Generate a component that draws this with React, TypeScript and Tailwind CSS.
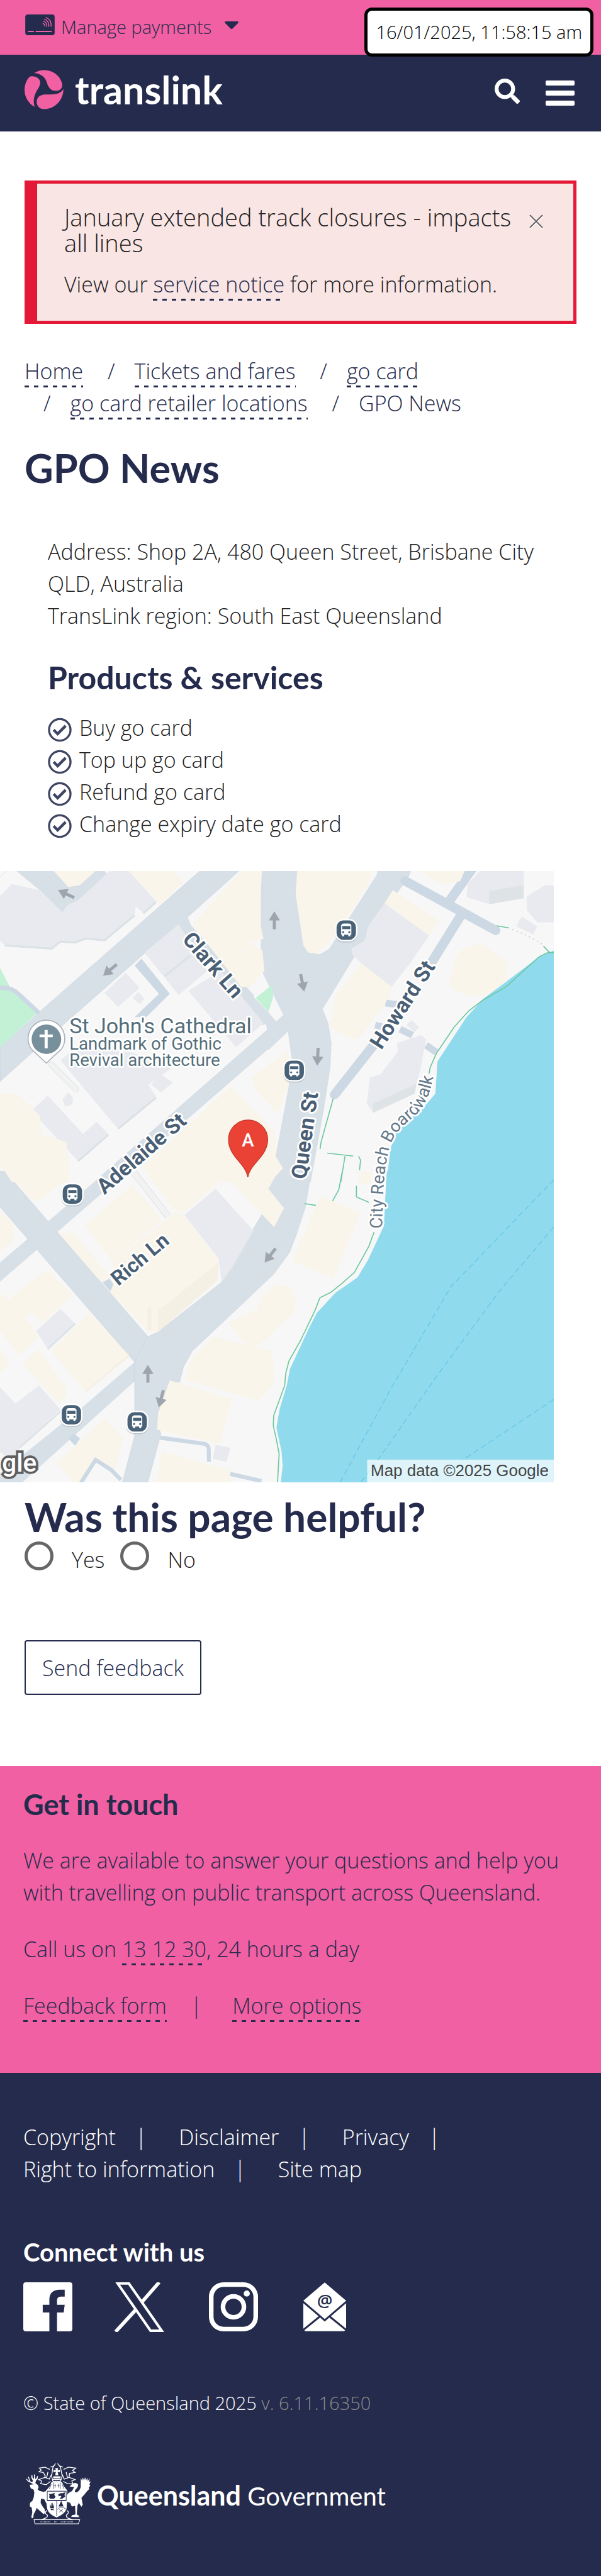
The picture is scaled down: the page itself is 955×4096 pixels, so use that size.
import React from "react";
import { FaSearch } from "react-icons/fa";

const HEAD = "font-['Lato','Open_Sans',sans-serif] font-bold";

function DottedLink({ href = "#", children }: { href?: string; children: React.ReactNode }) {
  return (
    <a
      href={href}
      className="bg-[repeating-linear-gradient(90deg,#252b4c_0_7px,transparent_7px_15px)] bg-[length:100%_3px] bg-bottom bg-no-repeat pb-[3px] text-[#252b4c]"
    >
      {children}
    </a>
  );
}

function CardIcon() {
  return (
    <svg viewBox="0 0 58 41" className="h-[33px] w-[47px]" aria-hidden="true">
      <rect width="58" height="41" rx="5" fill="#252b4c" />
      <path d="M5.500 33.500H17M20.500 33.500H52" stroke="#f060a2" strokeWidth="2.400" fill="none" />
      <g stroke="#f060a2" strokeWidth="1.800" fill="none" strokeLinecap="round">
        <path d="M35 18q4 1 3.500 5" />
        <path d="M36 13.500q7 2 6.500 10" />
        <path d="M38 9.500q9 3 8.500 14" />
        <path d="M41 6q11 4 10 17.500" />
      </g>
    </svg>
  );
}

function TranslinkMark() {
  return (
    <svg viewBox="0 0 77 77" className="h-[63px] w-[62px]" fill="#f060a2" aria-hidden="true">
      <path d="M19 6C25 2 31 0 38.500 0 56 0 70 11 74 26c2 8-3 15-12 15-8 0-12-4-15-9-3-6-4-13-9-18-5-5-12-8-19-8z" />
      <path d="M15.500 12c8 0 15 5 15.500 12 0 8-5 13-9 21-4 9-5 18-2 27.500C8 66 0 53 0 39 0 29 4 20 9 14c2-1.500 4-2 6.500-2z" />
      <path d="M76.800 37C77 59 60 77 39 77c-9 0-15-6-15-14 0-9 6-14 15-15 8 0 15 1 24-1 7-2 11-5 13.800-10z" />
    </svg>
  );
}

function CheckIcon() {
  return (
    <svg viewBox="0 0 39 39" className="h-[39px] w-[38px]" fill="none" stroke="#3f4562" aria-hidden="true">
      <circle cx="19.500" cy="19.500" r="17.500" strokeWidth="3.400" />
      <path d="M9.500 19.500l6.500 6.500L29 13" strokeWidth="4.500" />
    </svg>
  );
}

function Bus({ x, y }: { x: number; y: number }) {
  return (
    <g transform={`translate(${x} ${y})`}>
      <rect x="-22" y="-21" width="44" height="45" rx="16" fill="#9aa5b0" opacity="0.5" />
      <rect x="-22" y="-22" width="44" height="44" rx="16" fill="#fff" />
      <rect x="-19" y="-19" width="38" height="38" rx="13" fill="#4a6278" />
      <path d="M-10-9q1-4 5-4H5q4 0 5 4V9H8v3H4V9H-4v3H-8V9h-2z" fill="#fff" />
      <path d="M-8-8H8v6H-8z" fill="#4a6278" />
      <circle cx="-6" cy="4" r="2" fill="#4a6278" />
      <circle cx="6" cy="4" r="2" fill="#4a6278" />
    </g>
  );
}

function Arrow({ x, y, r }: { x: number; y: number; r: number }) {
  return (
    <path
      transform={`translate(${x} ${y}) rotate(${r})`}
      d="M0-18L11 0H3V17H-3V0H-11z"
      fill="#9fa5ae"
    />
  );
}

function StreetMap() {
  const road = "#d7dfe7";
  const lane = "#ccd8e3";
  const cream = "#f9f5ea";
  const grey = "#e8eaef";
  const q1 = "translate(0 -10) scale(.3827 .3954)";
  const q2 = "translate(540 -10) scale(.4075 .3954)";
  const q3 = "translate(0 590) scale(.3827 .3954)";
  const q4 = "translate(540 590) scale(.4075 .3954)";
  return (
    <svg viewBox="0 0 1086 1200" className="block w-full" role="img" aria-label="Map showing GPO News">
      <rect width="1086" height="1200" fill="#f7f7f7" />
      <g fill={road} stroke="#c9d3dd" strokeWidth="2">
        <g transform={q1}>
          <path d="M1030 20L205 722 0 900V1070L310 800 740 435 975 290 960 255 1110 125 1230 20z" />
          <path d="M-5 60L40 20M80 20L205 120 320 230 345 195 375 185 400 170 545 40 530 20H485L400 100 350 105 270 20z" />
          <path d="M905 290L1345 790 1420 770 975 290z" stroke="none" />
          <path d="M1415 775L490 1562 525 1622 1475 822 1460 735z" />
          <path d="M690 495L815 635 690 750 750 750 870 635 725 460z" fill={lane} stroke="none" />
        </g>
        <g transform={q3}>
          <path d="M-5-2H25L760 820 690 945-5 170z" />
          <path d="M490 45L-5 455V550L525 105z" stroke="none" />
          <path d="M690 945L415 1175-5 1500V1550H105L690 1040z" stroke="none" />
          <path d="M1430-2H1568V150L1490 370 1400 510 1270 630 985 890 940 970 920 1045 870 1040 805 1250 825 1300 755 1550H625L690 1310V945L755 820 810 795 1140 545 1340 215 1455 180 1375 85 1385 35z" />
          <path d="M525 550L570 600 590 570 560 530z" fill={lane} stroke="none" />
          <path d="M350 1325L385 1360 410 1325 380 1300z" fill={lane} stroke="none" />
        </g>
        <path stroke="none" d="M515 0H582L580 45 595 150 610 165 555 165 540 250 550 290 530 450 540 570 525 610H600V0z" />
        <g transform={q2}>
          <path d="M-70 20H105L98 140 135 400 160 430 215 438 260 410 490 40V20H655L640 60 610 100 430 370 375 460 228 710 255 780 270 880 265 1000 235 1200 170 1570H0L-70 1568-62 1530-27 1500-62 1440 5 1100 22 960 0 820 60 820 78 960 65 1100 0 1440-40 820-50 740-70 700z" stroke="none" />
        </g>
        <g transform={q4} stroke="none">
          <path d="M-50-2H175L145 180 100 320 70 400 0 500-50 550z" />
        </g>
      </g>
      <g transform={q1}>
        <path fill="#f7f7f7" d="M1340 520L1452 740 1415 772 1378 730 1300 650z" />
        <path fill="#f7f7f7" d="M1475 822L1495 960 1478 1100 1412 1440 1180 1095z" />
        <path fill="#c3f1d5" d="M0 505L50 600 100 640 190 730 0 900zM1395 590L1310 655 1375 725 1400 650z" />
        <path stroke={lane} strokeWidth="22" fill="none" d="M0 605Q60 600 100 640L200 730" />
        <path fill={grey} d="M0 150L60 90 200 120 320 230 345 195 400 170 545 40 560 25H660L800 175 735 235 695 200 690 245 535 370 440 360 385 380 310 375 265 410 25 395 0 370zM740 430L915 290 1065 520 915 640zM965 620L1130 520 1350 780 1210 900zM535 630L645 530 715 605 605 700zM680 655L710 625 740 660 715 685zM310 965L440 860 900 990 760 1085 800 1145 605 1305zM775 1085L820 1030 885 1075 825 1125zM160 1215L245 1140 425 1330 495 1270 555 1330 400 1465zM320 1160L350 1125 375 1150 370 1185 335 1195z" />
        <path stroke="#dbe2e5" strokeWidth="10" fill="none" d="M25 395L265 410 310 375 385 380 440 360 535 370 690 245M845 545L975 445M605 1305L800 1150M400 1465L555 1335M735 235L800 178" />
        <path fill={cream} d="M275 25H490L410 95 350 105zM660 25H890L940 80 820 190zM1200 65L1250 25H1342L1330 270 1350 360 1280 385 1345 420 1355 520 1280 600 1235 600 985 290 1110 160zM0 1130L90 1130 205 1240 210 1330 340 1370 355 1480 355 1568H60L0 1480zM735 1490L1180 1095 1410 1320 1412 1440 1450 1500 1385 1568H780zM1290 1050L1470 920 1490 960 1475 1100 1425 1235 1310 1110z" />
        <path stroke="#dbe2e5" strokeWidth="30" strokeLinecap="round" d="M262 985L390 1108" />
        <path stroke="#f2f2f2" strokeWidth="24" strokeLinecap="round" d="M262 985L390 1108" />
      </g>
      <g transform={q3}>
        <path fill={cream} d="M30 0H345L350 30 205 140H165zM435 265L680 65 820 225 815 250 575 445zM300 305H380L560 520 520 550zM580 445L900 200 940 215 1120 430 1115 540 810 795 755 790 565 595 580 560zM750 0H1425L1375 85 1455 180 1405 275 1160 25 935 205 880 180zM0 190L70 270V340L0 400zM0 600L45 635 240 485 370 610 220 750 165 700 130 720 200 820 100 910 0 790zM265 890L460 700 660 910 440 1095zM115 950L200 880 340 1080V1110L300 1150zM290 1440L540 1225 630 1320 590 1480 485 1420 410 1550H380zM955 1000L980 930 1095 820 1395 890 1405 1045 1330 1135 955 1035zM1170 750L1320 680 1330 630 1410 560 1490 575 1515 630 1510 690 1365 830 1310 870 1250 850zM870 1035L1190 1130 1130 1350 805 1280 810 1200zM830 1390L1180 1480 1170 1550H800zM1540 330H1568V470L1505 450zM0 880L40 930V960L0 1000z" />
        <path fill="#f4f0e3" d="M810 690L1120 450 1115 540 810 795zM755 680L775 670V780L755 790zM440 1085L660 905V920L440 1095z" />
        <path fill={grey} d="M945 215L1105 85 1300 295 1190 480 1135 550 1120 430zM185 790L310 680 385 755 245 880zM0 1070L80 1150 200 1060 310 1180 100 1370 60 1440 0 1390zM1105 1355L1180 1370 1160 1440 1090 1425z" />
        <path stroke={lane} strokeWidth="20" fill="none" d="M820 1320L1045 1350Q1070 1355 1070 1380V1440M415 1543L490 1430 570 1480 620 1530M1180 1500L1340 1535" />
        <path stroke="#dbe2e5" strokeWidth="34" fill="none" d="M675-10L860 220" />
        <path stroke="#f2f2f2" strokeWidth="28" fill="none" d="M670-15L865 225" />
        <path stroke="#dbe2e5" strokeWidth="8" fill="none" d="M245 880L385 755M100 1370L310 1190M1300 295L1190 480 1140 545" />
      </g>
      <g transform={q2}>
        <path stroke={lane} strokeWidth="46" fill="none" strokeLinecap="round" d="M950 10L840 170M625 75L830 190 1060 320M890 250L745 490M480 880L285 1135" />
        <path stroke={lane} strokeWidth="34" fill="none" d="M530 680L600 690M480 790L520 800M600 810L660 840M725 890L775 925" />
        <path fill={grey} d="M525 185L740 345 650 480 560 600 415 485 370 440 365 410 430 370 445 300zM985 25H1195V160L1030 190 920 155 925 90zM1210 150L1300 95 1340 100V280H1260L1210 220zM1185 250L1260 300 1240 340 1160 300zM585 880L700 840 725 860 700 1000 670 1120 470 1225 440 1180 455 1050 505 1035 590 920zM655 765L692 800 670 825 630 790z" />
        <path fill="#dee3e6" d="M1030 125L1195 95V160L1030 190zM470 1180L680 1080 670 1130 470 1225z" />
        <path fill={cream} d="M565 120L790 275 740 345 525 185zM415 485L560 600 555 640 410 850 370 860 260 800 290 640zM105 25H465L455 70 350 250 260 380 200 435 160 430 135 395 98 140zM690 25H910L890 75 800 92zM870 450Q900 390 1000 390L1120 480 1110 570 1060 620Q960 670 870 620 820 580 840 560z" />
        <path fill="#90daee" d="M1340 420L1270 450 1110 575 1000 660 920 750 850 860 780 970 770 1130 700 1215 590 1300 555 1400 535 1568H1345V420z" />
        <g stroke="#6cc7a0" strokeWidth="5" fill="none">
          <path d="M1340 430H1312L1270 450 1110 600 1000 665 930 720 860 800 775 930 745 1000 740 1030M278 1155L220 1370 215 1405M250 1425L375 1440M335 1440L315 1568M400 1440L410 1460 405 1510M1065 297L1125 308M1290 398L1320 430" />
          <path stroke="#c9c9cf" strokeDasharray="6 16" d="M1140 315Q1220 345 1285 390" />
        </g>
      </g>
      <g transform={q4}>
        <path fill={cream} d="M215 120L410 205 280 530 85 445zM405 0H460V60L400 60zM-40 100L42 180-10 275zM-5 570H50L80 590 95 630 90 700 30 750-5 765z" />
        <path fill="#90daee" d="M536-5L522 270 445 440 395 525 290 600 200 700 160 780 70 980 55 1060 20 1180 5 1270 30 1390 35 1460 25 1550H1345V-5z" />
        <path stroke="#6cc7a0" strokeWidth="5" fill="none" d="M475 300L450 370 380 500 320 555 265 600 215 625 190 690 120 840 65 940 50 1000 45 1060 10 1160-8 1210-10 1260 5 1330 18 1400 10 1550M322 0L305 90 275 145M390 70V125L450 152M140 158L195 167" />
        <path stroke="#62c8e6" strokeWidth="4" fill="none" strokeDasharray="28 16" d="M1340 40L845 570 560 1070 310 1543M1340 275L1080 590 780 1010 500 1420 410 1543M1340 1130L910 1425 760 1543" />
      </g>
      <Arrow x={538} y={97} r={0} />
      <Arrow x={130} y={45} r={-65} />
      <Arrow x={216} y={194} r={-130} />
      <Arrow x={593} y={219} r={168} />
      <Arrow x={623} y={364} r={183} />
      <Arrow x={530} y={754} r={-142} />
      <Arrow x={290} y={987} r={0} />
      <Arrow x={316} y={1035} r={195} />
      <Bus x={679} y={116} />
      <Bus x={577} y={391} />
      <Bus x={142} y={634} />
      <Bus x={140} y={1067} />
      <Bus x={269} y={1081} />
      <path d="M91 377L62 350A36 36 0 1 1 120 350Q104 364 91 377z" fill="#fff" stroke="#aab4bb" strokeWidth="2" />
      <circle cx="91" cy="330" r="29" fill="#78909c" />
      <path d="M87.500 312h6v9h10v5h-10v22h-6v-22h-10v-5h10z" fill="#fff" />
      <path d="M486 601C482 574 448 560 448 527a38.500 38.500 0 0 1 77 0C525 560 490 574 486 601z" fill="#ea4335" stroke="#c5352a" strokeWidth="1.500" />
      <g className="font-['Roboto',sans-serif] font-normal" stroke="#fff" strokeWidth="7" strokeLinejoin="round" style={{ paintOrder: "stroke" }}>
        <g fill="#546e7a">
          <text x="136" y="319" fontSize="42">St John's Cathedral</text>
          <text x="136" y="351" fontSize="34">Landmark of Gothic</text>
          <text x="136" y="383" fontSize="34">Revival architecture</text>
        </g>
        <g fill="#4a5f75" fontWeight="700" fontSize="42">
          <text transform="translate(356 135) rotate(49)">Clark Ln</text>
          <text transform="translate(205 636) rotate(-41)">Adelaide St</text>
          <text transform="translate(600 606) rotate(-82)">Queen St</text>
          <text transform="translate(748 352) rotate(-57)">Howard St</text>
          <text transform="translate(232 815) rotate(-40)" fontSize="40">Rich Ln</text>
        </g>
        <path id="boardwalk" stroke="none" fill="none" d="M749 702C751 640 752 590 762 550S792 500 816 478 850 420 862 330" />
        <text fontSize="34" fill="#64788a">
          <textPath href="#boardwalk">City Reach Boardwalk</textPath>
        </text>
      </g>
      <g className="font-['Roboto',sans-serif]">
        <text x="486" y="540" fontSize="36" fontWeight="500" fill="#fff" textAnchor="middle">A</text>
        <text x="4" y="1178" fontSize="50" fontWeight="500" fill="#fff" stroke="#5f5f5f" strokeWidth="9" style={{ paintOrder: "stroke" }}>gle</text>
      </g>
      <rect x="720" y="1155" width="366" height="45" fill="#fff" opacity="0.7" />
      <text x="727" y="1187" fontSize="32" fontWeight="400" fill="#444" className="font-['Liberation_Sans',sans-serif]">Map data ©2025 Google</text>
    </svg>
  );
}

function Crest() {
  return (
    <svg viewBox="24 20 396 372" className="h-[98px] w-[107px] shrink-0" fill="#fff" aria-hidden="true">
      <path d="M50 153L72 150 60 142 40 133 27 118 31 116 44 128 47 127 39 104 44 103 54 132 64 137 70 130 59 108 62 92 66 93 67 108 76 118 76 90 81 90 84 118 92 112 95 100 100 102 98 117 88 128 84 142 100 155 104 168 98 180 110 190 135 196 146 190 150 206 148 240 156 262 150 264 138 240 118 236 116 262 128 284 140 300 143 322 134 330 112 310 92 292 84 312 74 330 72 350 64 356 60 346 66 318 62 290 50 282 52 262 66 250 74 230 78 200 74 182 56 174z" />
      <path d="M290 162L312 144Q334 136 342 152 342 168 326 182 316 200 334 198 352 190 358 166L358 112 366 128 370 108 378 126 384 106 390 126 398 110 400 130 412 114 408 136 418 132 410 152 416 156 406 172 410 178 394 194 380 212 362 232 370 272 362 286 346 262 338 278 334 332 348 340 346 348 300 346 306 336 326 332 324 280 304 284 294 262 278 256 270 226 282 204 306 190 318 166 300 164z" />
      <path d="M148 184H276V248L272 300Q258 332 212 350 166 332 156 300L148 248z" />
      <g fill="none" stroke="#252b4c" strokeWidth="3.500">
        <path d="M156 192H270V246H156zM213 250V342M154 249H272" />
      </g>
      <g fill="#252b4c">
        <path d="M166 206q8 6 20 0l16-4-4 12 8 10-8 12H174l-8-8 4-8zM222 212q12-12 24-8l18-6-4 16 4 10-20 14-14-4 12-8-6-8-10 4zM172 268l8 18 2-24h6l2 24 8-18-2 26h-22zM176 298h20l-2 8h-16zM240 250l14 34h-30z" />
      </g>
      <g fill="none" stroke="#252b4c" strokeWidth="3">
        <path d="M218 302q20-26 52-2M228 300l22 18M250 300l-22 18" />
      </g>
      <path d="M182 136h62l12 24 18 24H152l20-24z" />
      <g fill="none" stroke="#252b4c" strokeWidth="3">
        <path d="M192 140v38M234 140v38M203 148v22M197 156h12M224 148v22M218 156h12M180 150l-12 28M246 150l12 28" />
      </g>
      <g fill="none" stroke="#fff" strokeWidth="5">
        <path d="M206 24L190 48 182 100 190 132M218 24L236 48 246 100 236 132M176 46L196 38M228 38L250 46M188 120H240M190 132H238" />
        <path d="M172 60L142 46 108 52 120 64 106 74 132 78 144 100 138 112M254 60L284 46 328 52 308 66 324 78 290 84 288 106" />
        <path d="M182 90L168 118 142 108 104 122 122 130 116 146 150 152 176 132M246 90L258 118 288 108 324 122 304 130 312 148 278 146 252 132M160 76l-8 34M270 76l8 34" />
        <path d="M156 308Q138 316 148 330 166 336 150 352L120 364M274 308Q290 316 278 330 262 338 280 354L310 364" />
      </g>
      <path d="M204 52h18l-4 14 14-4v16l-14-4 6 22h-20l4-22-14 4V62l14 4zM192 102h44v12h-44z" />
      <path d="M76 363H352L344 388H82z" fill="none" stroke="#fff" strokeWidth="4" />
      <path d="M116 376h62M198 376h20M238 376h76" stroke="#fff" strokeWidth="8" strokeDasharray="3 4" opacity="0.75" />
    </svg>
  );
}

const crumbs = ["Tickets and fares", "go card", "go card retailer locations"];
const services = ["Buy go card", "Top up go card", "Refund go card", "Change expiry date go card"];

export default function App() {
  return (
    <div className="w-full bg-white font-['Open_Sans',sans-serif] text-[34px] leading-[51px] font-light text-[#222]">
      <div className="relative flex h-[87px] items-start bg-[#f060a2] px-[40px] pt-[23px] text-[#252b4c]">
        <button type="button" className="flex items-start text-[29px] leading-[40px]">
          <CardIcon />
          <span className="ml-[10px]">Manage payments</span>
          <svg viewBox="0 0 22 12" className="mt-[11px] ml-[21px] h-[12px] w-[22px]" fill="#252b4c" aria-hidden="true">
            <path d="M2 0H20Q23 0 21 3L12.500 11.500Q11 12.500 9.500 11.500L1 3Q-1 0 2 0z" />
          </svg>
        </button>
        <time className="absolute top-[12px] right-[12px] z-10 flex h-[78px] items-center rounded-[12px] border-[5px] border-black bg-white px-[13px] text-[29px] leading-[40px] text-black">
          16/01/2025, 11:58:15 am
        </time>
      </div>

      <header className="flex h-[122px] items-start justify-between border-b border-[#1b2040] bg-[#252b4c] pr-[42px] pl-[39px] text-white">
        <a href="#" className="flex items-start pt-[24px]" aria-label="translink home">
          <TranslinkMark />
          <span className={`ml-[18px] text-[61px] leading-[64px] ${HEAD}`}>translink</span>
        </a>
        <div className="flex items-start gap-[41px] pt-[38px]">
          <button type="button" aria-label="Search">
            <FaSearch className="size-[40px]" />
          </button>
          <button type="button" aria-label="Menu" className="flex flex-col gap-[8px] pt-[3px]">
            <span className="h-[8px] w-[46px] rounded-[2px] bg-white" />
            <span className="h-[8px] w-[46px] rounded-[2px] bg-white" />
            <span className="h-[8px] w-[46px] rounded-[2px] bg-white" />
          </button>
        </div>
      </header>

      <main>
        <div className="px-[39px] pt-[78px]">
          <section className="flex items-start justify-between border-[5px] border-l-[20px] border-[#e31937] bg-[#f9e5e4] pt-[33px] pr-[48px] pb-[32px] pl-[43px]">
            <div>
              <h2 className="text-[38px] leading-[41px]">January extended track closures - impacts all lines</h2>
              <p className="mt-[20px]">
                View our <DottedLink>service notice</DottedLink> for more information.
              </p>
            </div>
            <button type="button" aria-label="Close" className="mt-[16px] shrink-0">
              <svg viewBox="0 0 22 24" className="h-[24px] w-[22px]" fill="none" aria-hidden="true">
                <path d="M1 3L21 23M21 3L1 23" stroke="#fff" strokeWidth="2" />
                <path d="M1 1L21 21M21 1L1 21" stroke="#666" strokeWidth="2" />
              </svg>
            </button>
          </section>

          <nav aria-label="Breadcrumb" className="mt-[50px] text-[#252b4c]">
            <ol>
              <li className="inline-block"><DottedLink>Home</DottedLink></li>
              {crumbs.map((c) => (
                <React.Fragment key={c}>
                  {" "}
                  <li className="inline-block"><span className="pr-[31px] pl-[30px]">/</span><DottedLink>{c}</DottedLink></li>
                </React.Fragment>
              ))}{" "}
              <li className="inline-block"><span className="pr-[31px] pl-[30px]">/</span>GPO News</li>
            </ol>
          </nav>

          <h1 className={`mt-[41px] text-[63px] leading-[72px] text-[#252b4c] ${HEAD}`}>GPO News</h1>

          <div className="px-[37px] pt-[72px]">
            <p>Address: Shop 2A, 480 Queen Street, Brisbane City QLD, Australia</p>
            <p>TransLink region: South East Queensland</p>
            <h2 className={`mt-[44px] text-[50px] leading-[56px] text-[#252b4c] ${HEAD}`}>Products &amp; services</h2>
            <ul className="mt-[27px]">
              {services.map((s) => (
                <li key={s} className="flex h-[51px] items-start">
                  <span className="mt-[9px] mr-[12px]"><CheckIcon /></span>
                  {s}
                </li>
              ))}
            </ul>
          </div>
        </div>

        <div className="mt-[49px] mr-[75px]">
          <StreetMap />
        </div>

        <form className="px-[39px] pt-[19px] pb-[113px]" onSubmit={(e) => e.preventDefault()}>
          <h2 className={`text-[64px] leading-[72px] text-[#252b4c] ${HEAD}`}>Was this page helpful?</h2>
          <div className="mt-[3px] flex h-[53px] items-start">
            <input id="yes" type="radio" name="helpful" className="size-[46px] appearance-none rounded-full border-[5px] border-[#666] bg-white" />
            <label htmlFor="yes" className="mt-[4px] mr-[25px] ml-[29px]">Yes</label>
            <input id="no" type="radio" name="helpful" className="size-[46px] appearance-none rounded-full border-[5px] border-[#666] bg-white" />
            <label htmlFor="no" className="mt-[4px] ml-[29px]">No</label>
          </div>
          <button type="submit" className="mt-[104px] block h-[87px] rounded-[4px] border-2 border-[#252b4c] px-[26px] pt-[2px] text-[#252b4c]">
            Send feedback
          </button>
        </form>
      </main>

      <section className="bg-[#f060a2] px-[37px] pt-[36px] pb-[81px] text-[#252b4c]">
        <h2 className={`text-[45px] leading-[50px] ${HEAD}`}>Get in touch</h2>
        <p className="mt-[39px]">We are available to answer your questions and help you with travelling on public transport across Queensland.</p>
        <p className="mt-[39px]">Call us on <DottedLink href="tel:131230">13 12 30</DottedLink>, 24 hours a day</p>
        <p className="mt-[39px]">
          <DottedLink>Feedback form</DottedLink>
          <span className="pr-[48px] pl-[38px]">|</span>
          <DottedLink>More options</DottedLink>
        </p>
      </section>

      <footer className="bg-[#252b4c] px-[37px] pt-[77px] pb-[83px] text-white">
        <nav aria-label="Footer" className="flex flex-wrap gap-x-[51px] pr-[160px]">
          {["Copyright", "Disclaimer", "Privacy", "Right to information"].map((t) => (
            <span key={t}><a href="#" className="mr-[31px]">{t}</a>|</span>
          ))}
          <a href="#">Site map</a>
        </nav>
        <h2 className={`mt-[84px] text-[40px] leading-[45px] ${HEAD}`}>Connect with us</h2>
        <div className="mt-[25px] flex items-start">
          <a href="#" aria-label="Facebook" className="mr-[67px]">
            <svg viewBox="0 0 96 96" className="size-[78px]" fill="#fff" aria-hidden="true">
              <path d="M5 0H91Q96 0 96 5V91Q96 96 91 96H66V59H79L81 44H66V35Q66 28 74 28H81V14.500H71Q51 15 51 34V44H38V59H51V96H5Q0 96 0 91V5Q0 0 5 0z" />
            </svg>
          </a>
          <a href="#" aria-label="X" className="mr-[71px]">
            <svg viewBox="0 0 98 98" className="size-[79px]" fill="none" stroke="#fff" aria-hidden="true">
              <path d="M6 2H28L93 95.500H71z" strokeWidth="5" />
              <path d="M88 0L53 40M43 53L2 97.500" strokeWidth="7" />
            </svg>
          </a>
          <a href="#" aria-label="Instagram" className="mr-[72px]">
            <svg viewBox="0 0 96 96" className="size-[78px]" fill="none" stroke="#fff" aria-hidden="true">
              <rect x="4.500" y="4.500" width="87" height="87" rx="24" strokeWidth="9" />
              <circle cx="48" cy="48" r="20.500" strokeWidth="9" />
              <circle cx="74" cy="22" r="6" fill="#fff" stroke="none" />
            </svg>
          </a>
          <a href="#" aria-label="Email">
            <svg viewBox="0 0 84 96" className="h-[78px] w-[68px]" aria-hidden="true">
              <path fill="#fff" d="M42 0L84 36 42 72 0 36zM0 41L30 66.500 0 91zM84 41V91L54 66.500zM33 69L42 77 51 69 82 94 80 96H4L2 94z" />
              <text x="42" y="48" textAnchor="middle" fontSize="34" fontWeight="600" fill="#252b4c">@</text>
            </svg>
          </a>
        </div>
        <p className="mt-[91px] text-[29px] leading-[44px]">
          © State of Queensland 2025 <span className="text-[#8b8b8b]">v. 6.11.16350</span>
        </p>
        <a href="#" className="mt-[73px] flex items-start gap-[8px] pl-[2px]">
          <Crest />
          <span className="pt-[22px] font-['Lato',sans-serif] text-[40px] leading-[60px] font-normal whitespace-nowrap">
            <b className="text-[43px] font-bold">Queensland</b> Government
          </span>
        </a>
      </footer>
    </div>
  );
}
